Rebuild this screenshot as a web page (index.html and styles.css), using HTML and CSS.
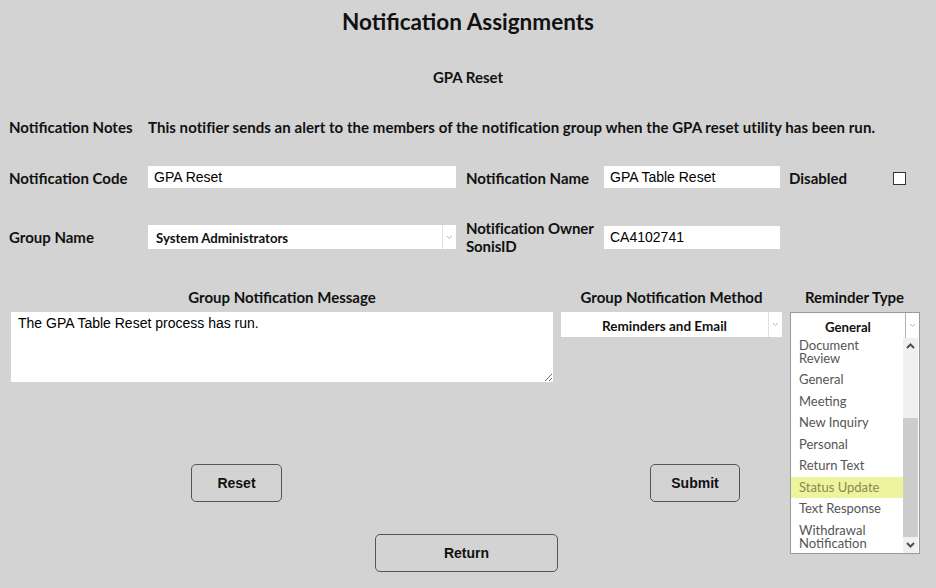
FILE: index.html
```html
<!DOCTYPE html>
<html>
<head>
<meta charset="utf-8">
<link rel="stylesheet" href="styles.css">
</head>
<body>
<div class="page">
  <h1 class="title">Notification Assignments</h1>
  <div class="subtitle">GPA Reset</div>

  <div class="row notes-row">
    <div class="label">Notification Notes</div>
    <div class="notes">This notifier sends an alert to the members of the notification group when the GPA reset utility has been run.</div>
  </div>

  <div class="row form-row">
    <div class="label">Notification Code</div>
    <input class="text-input wide" type="text" value="GPA Reset">
    <div class="label label2">Notification Name</div>
    <input class="text-input narrow" type="text" value="GPA Table Reset">
    <div class="label label3">Disabled</div>
    <div class="checkbox"></div>
  </div>

  <div class="row form-row row3">
    <div class="label">Group Name</div>
    <div class="select wide-select">
      <span class="select-text">System Administrators</span>
      <span class="select-arrow"><svg width="7" height="5" viewBox="0 0 7 5"><path d="M1 1 L3.5 3.5 L6 1" fill="none" stroke="#b5b5b5" stroke-width="1"/></svg></span>
    </div>
    <div class="label label2 two-line">Notification Owner<br>SonisID</div>
    <input class="text-input narrow tall" type="text" value="CA4102741">
  </div>

  <div class="lower">
    <div class="col col-msg">
      <div class="col-head">Group Notification Message</div>
      <textarea class="message">The GPA Table Reset process has run.</textarea>
    </div>
    <div class="col col-method">
      <div class="col-head">Group Notification Method</div>
      <div class="select method-select">
        <span class="select-text centered">Reminders and Email</span>
        <span class="select-arrow"><svg width="7" height="5" viewBox="0 0 7 5"><path d="M1 1 L3.5 3.5 L6 1" fill="none" stroke="#b5b5b5" stroke-width="1"/></svg></span>
      </div>
    </div>
    <div class="col col-reminder">
      <div class="col-head">Reminder Type</div>
      <div class="select reminder-select">
        <span class="select-text centered">General</span>
        <span class="select-arrow bordered"><svg width="7" height="5" viewBox="0 0 7 5"><path d="M1 1 L3.5 3.5 L6 1" fill="none" stroke="#b5b5b5" stroke-width="1"/></svg></span>
        <div class="listbox">
          <ul class="options">
            <li class="opt two first">Document<br>Review</li>
            <li class="opt">General</li>
            <li class="opt">Meeting</li>
            <li class="opt">New Inquiry</li>
            <li class="opt">Personal</li>
            <li class="opt">Return Text</li>
            <li class="opt selected">Status Update</li>
            <li class="opt">Text Response</li>
            <li class="opt two last">Withdrawal<br>Notification</li>
          </ul>
          <div class="scrollbar">
            <div class="sb-btn"><svg width="9" height="6" viewBox="0 0 9 6"><path d="M1 5 L4.5 1.5 L8 5" fill="none" stroke="#505050" stroke-width="2"/></svg></div>
            <div class="sb-track"><div class="sb-thumb"></div></div>
            <div class="sb-btn"><svg width="9" height="6" viewBox="0 0 9 6"><path d="M1 1 L4.5 4.5 L8 1" fill="none" stroke="#505050" stroke-width="2"/></svg></div>
          </div>
        </div>
      </div>
    </div>
  </div>

  <div class="buttons">
    <button class="btn btn-reset">Reset</button>
    <button class="btn btn-submit">Submit</button>
  </div>
  <div class="buttons return-row">
    <button class="btn btn-return">Return</button>
  </div>
</div>
</body>
</html>
```

FILE: styles.css
```css
* { box-sizing: border-box; }
html, body {
  margin: 0;
  padding: 0;
  background: #d3d3d3;
}
body {
  width: 936px;
  height: 588px;
  overflow: hidden;
  font-family: Lato, "Noto Sans", sans-serif;
  color: #111;
}
.page {
  position: relative;
}
.title {
  margin: 10px 0 0;
  font-size: 22.5px;
  line-height: 24px;
  font-weight: 700;
  text-align: center;
}
.subtitle {
  margin-top: 35px;
  font-size: 15px;
  line-height: 16px;
  font-weight: 700;
  text-align: center;
}
.row {
  display: flex;
  align-items: center;
  padding-left: 9px;
}
.label {
  font-size: 15px;
  font-weight: 700;
  line-height: 16px;
  width: 139px;
  flex: none;
}
.notes-row {
  margin-top: 34px;
}
.notes {
  font-size: 15px;
  font-weight: 700;
  line-height: 16px;
  white-space: nowrap;
  letter-spacing: 0.05px;
}
.form-row {
  margin-top: 31px;
  height: 22px;
}
.form-row .label {
  padding-top: 2px;
}
.row3 {
  margin-top: 37px;
  height: 24px;
}
.row3 .label {
  padding-top: 0;
}
.text-input {
  height: 22px;
  border: none;
  background: #fff;
  font-family: "Liberation Sans", Arial, sans-serif;
  font-size: 14px;
  color: #000;
  padding: 0 6px;
  outline: none;
  flex: none;
}
.wide { width: 308px; }
.narrow { width: 176px; }
.tall { height: 23px; }
.label2 {
  margin-left: 10px;
  width: 138px;
}
.label3 {
  margin-left: 9px;
  width: 104px;
}
.two-line {
  line-height: 18px;
  letter-spacing: -0.1px;
}
.checkbox {
  width: 13px;
  height: 13px;
  border: 1px solid #333;
  background: #fff;
  flex: none;
  margin-top: 2px;
}
.select {
  position: relative;
  display: flex;
  align-items: center;
  background: #fff;
  height: 24px;
  flex: none;
}
.wide-select { width: 308px; }
.select-text {
  flex: 1;
  font-size: 13.2px;
  font-weight: 700;
  padding-left: 8px;
  padding-top: 2px;
  color: #111;
}
.select-text.centered {
  text-align: center;
  padding-left: 0;
}
.method-select .select-text {
  font-size: 13.5px;
}
.select-arrow {
  width: 14px;
  height: 100%;
  border-left: 1px solid #e0e0e0;
  display: flex;
  align-items: center;
  justify-content: center;
}
.select-arrow.bordered {
  border-left: 1px solid #b0b0b0;
}
.lower {
  display: flex;
  margin-top: 40px;
  padding-left: 11px;
}
.col { flex: none; }
.col-head {
  font-size: 15px;
  font-weight: 700;
  line-height: 16px;
  text-align: center;
  margin-bottom: 7px;
}
.col-msg { width: 542px; }
.col-method { width: 221px; margin-left: 8px; }
.col-reminder { width: 129px; margin-left: 8px; }
.message {
  display: block;
  width: 542px;
  height: 70px;
  border: none;
  background: #fff;
  resize: both;
  font-family: "Liberation Sans", Arial, sans-serif;
  font-size: 14px;
  color: #000;
  padding: 3px 7px;
  outline: none;
}
.method-select {
  width: 221px;
  height: 25px;
}
.reminder-select {
  width: 130px;
  height: 27px;
  border: 1px solid #9a9a9a;
}
.listbox {
  position: absolute;
  left: -1px;
  top: 25px;
  width: 130px;
  height: 216px;
  border: 1px solid #9a9a9a;
  border-top: none;
  background: #fff;
  display: flex;
  overflow: hidden;
}
.options {
  list-style: none;
  margin: 0;
  padding: 0;
  flex: 1;
}
.opt {
  font-size: 13px;
  line-height: 21.5px;
  color: #555;
  padding-left: 8px;
}
.opt.two {
  line-height: 13px;
}
.opt.first {
  padding-top: 1px;
  padding-bottom: 4px;
}
.opt.last {
  padding-top: 4px;
}
.opt.selected {
  background: #eef39d;
  color: #8a8a50;
}
.scrollbar {
  width: 15px;
  flex: none;
  background: #f0f0f0;
  display: flex;
  flex-direction: column;
  margin-right: 1px;
}
.sb-btn {
  height: 16px;
  display: flex;
  align-items: center;
  justify-content: center;
}
.sb-track {
  flex: 1;
  position: relative;
}
.sb-thumb {
  position: absolute;
  left: 0;
  right: 0;
  top: 64px;
  bottom: 0;
  background: #cdcdcd;
}
.buttons {
  display: flex;
  margin-top: 82px;
}
.btn {
  height: 38px;
  border: 1px solid #555;
  border-radius: 5px;
  background: #d3d3d3;
  font-family: "Liberation Sans", Arial, sans-serif;
  font-size: 14px;
  font-weight: 700;
  color: #111;
  flex: none;
}
.btn-reset {
  width: 91px;
  margin-left: 191px;
}
.btn-submit {
  width: 90px;
  margin-left: 368px;
}
.return-row {
  margin-top: 32px;
}
.btn-return {
  width: 183px;
  margin-left: 375px;
}
```
